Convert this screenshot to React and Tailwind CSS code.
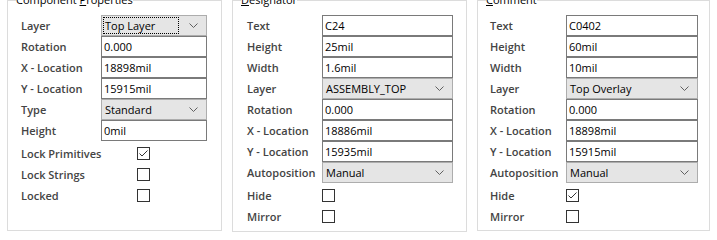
import React from 'react'

const font = { fontFamily: '"Open Sans", "Noto Sans", sans-serif' }

const Chevron = () => (
  <svg width="9" height="6" viewBox="0 0 9 6" className="shrink-0">
    <polyline points="0.5,0.5 4.5,4.5 8.5,0.5" fill="none" stroke="#606060" strokeWidth="1" />
  </svg>
)

const TextBox = ({ value }) => (
  <div className="h-[21px] border border-[#7a7a7a] bg-white px-[2px] flex items-center text-[11px] text-black leading-none whitespace-nowrap">
    {value}
  </div>
)

const Select = ({ value, focused }) => (
  <div className="h-[21px] border border-[#adadad] bg-[#e5e5e5] pl-[1px] pr-[8px] flex items-center justify-between text-[11px] text-black leading-none whitespace-nowrap">
    {focused ? (
      <span className="h-[17px] flex-1 mr-[10px] border border-dotted border-black flex items-center px-[1px]">{value}</span>
    ) : (
      <span className="px-[2px]">{value}</span>
    )}
    <Chevron />
  </div>
)

const CheckBox = ({ checked }) => (
  <div className="w-[13px] h-[13px] border border-[#333] bg-white flex items-center justify-center">
    {checked && (
      <svg width="11" height="11" viewBox="0 0 11 11">
        <polyline points="1.5,5.5 4,8 9.5,2.5" fill="none" stroke="#333" strokeWidth="1" />
      </svg>
    )}
  </div>
)

const Label = ({ children }) => (
  <div className="h-[21px] flex items-center text-[11px] font-semibold text-[#444] leading-none whitespace-nowrap">{children}</div>
)

// one row of label + field
const Row = ({ label, children }) => (
  <>
    <Label>{label}</Label>
    <div>{children}</div>
  </>
)

const CheckRow = ({ label, checked, indent }) => (
  <>
    <Label>{label}</Label>
    <div className={`h-[21px] flex items-center ${indent || ''}`}>
      <CheckBox checked={checked} />
    </div>
  </>
)

const Group = ({ title, className, children }) => (
  <fieldset className={`border border-[#dcdcdc] m-0 shrink-0 ${className}`}>
    <legend className="ml-[8px] px-0 text-[11px] text-black leading-[16px] whitespace-nowrap">
      {title}
    </legend>
    {children}
  </fieldset>
)

export default function App() {
  return (
    <div className="w-[717px] h-[240px] bg-white overflow-hidden" style={font}>
      <div className="flex items-start pl-[7px] -mt-[8px]">
        {/* Component Properties */}
        <Group
          title={<>Component <span className="underline">P</span>roperties</>}
          className="w-[215px] h-[239px]"
        >
          <div className="grid grid-cols-[80px_106px] pl-[13px] pt-[7px]">
            <Row label="Layer"><Select value="Top Layer" focused /></Row>
            <Row label="Rotation"><TextBox value="0.000" /></Row>
            <Row label="X - Location"><TextBox value="18898mil" /></Row>
            <Row label="Y - Location"><TextBox value="15915mil" /></Row>
            <Row label="Type"><Select value="Standard" /></Row>
            <Row label="Height"><TextBox value="0mil" /></Row>
          </div>
          <div className="grid grid-cols-[80px_106px] pl-[13px] pt-[2px]">
            <CheckRow label="Lock Primitives" checked indent="pl-[36px]" />
            <CheckRow label="Lock Strings" indent="pl-[36px]" />
            <CheckRow label="Locked" indent="pl-[36px]" />
          </div>
        </Group>

        {/* Designator */}
        <Group
          title={<><span className="underline">D</span>esignator</>}
          className="w-[235px] h-[240px] ml-[10px]"
        >
          <div className="grid grid-cols-[75px_131px] pl-[14px] pt-[7px]">
            <Row label="Text"><TextBox value="C24" /></Row>
            <Row label="Height"><TextBox value="25mil" /></Row>
            <Row label="Width"><TextBox value="1.6mil" /></Row>
            <Row label="Layer"><Select value="ASSEMBLY_TOP" /></Row>
            <Row label="Rotation"><TextBox value="0.000" /></Row>
            <Row label="X - Location"><TextBox value="18886mil" /></Row>
            <Row label="Y - Location"><TextBox value="15935mil" /></Row>
            <Row label="Autoposition"><Select value="Manual" /></Row>
          </div>
          <div className="grid grid-cols-[75px_131px] pl-[14px] pt-[2px]">
            <CheckRow label="Hide" />
            <CheckRow label="Mirror" />
          </div>
        </Group>

        {/* Comment */}
        <Group
          title={<><span className="underline">C</span>omment</>}
          className="w-[233px] h-[239px] ml-[10px]"
        >
          <div className="grid grid-cols-[76px_132px] pl-[12px] pt-[7px]">
            <Row label="Text"><TextBox value="C0402" /></Row>
            <Row label="Height"><TextBox value="60mil" /></Row>
            <Row label="Width"><TextBox value="10mil" /></Row>
            <Row label="Layer"><Select value="Top Overlay" /></Row>
            <Row label="Rotation"><TextBox value="0.000" /></Row>
            <Row label="X - Location"><TextBox value="18898mil" /></Row>
            <Row label="Y - Location"><TextBox value="15915mil" /></Row>
            <Row label="Autoposition"><Select value="Manual" /></Row>
          </div>
          <div className="grid grid-cols-[76px_132px] pl-[12px] pt-[2px]">
            <CheckRow label="Hide" checked />
            <CheckRow label="Mirror" />
          </div>
        </Group>
      </div>
    </div>
  )
}
